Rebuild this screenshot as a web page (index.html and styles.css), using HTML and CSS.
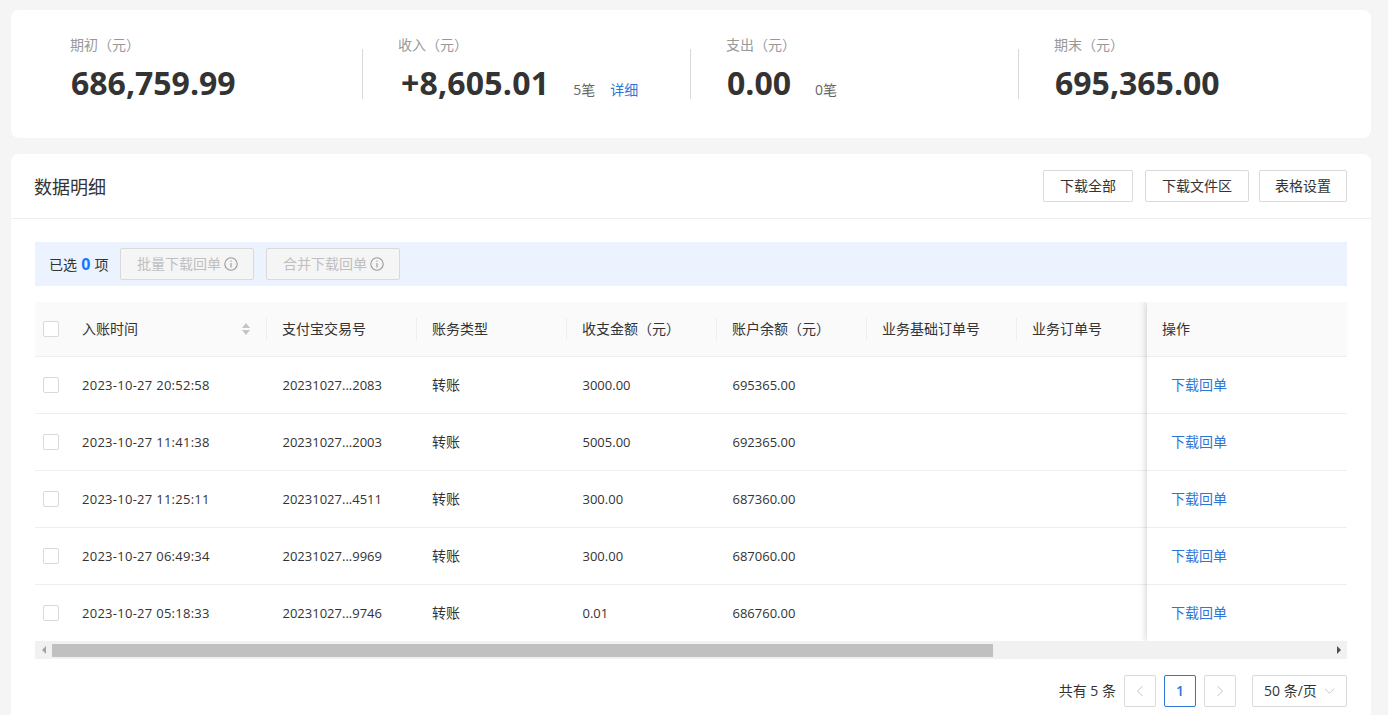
FILE: index.html
```html
<!DOCTYPE html>
<html lang="zh-CN">
<head>
<meta charset="utf-8">
<title>数据明细</title>
<link rel="stylesheet" href="styles.css">
</head>
<body>
<section class="card summary">
  <div class="stat">
    <div class="stat-label">期初（元）</div>
    <div class="stat-line"><span class="stat-value">686,759.99</span></div>
  </div>
  <div class="stat">
    <div class="stat-label">收入（元）</div>
    <div class="stat-line"><span class="stat-value stat-plus">+8,605.01</span><span class="stat-count">5笔</span><a class="stat-link">详细</a></div>
  </div>
  <div class="stat">
    <div class="stat-label">支出（元）</div>
    <div class="stat-line"><span class="stat-value">0.00</span><span class="stat-count">0笔</span></div>
  </div>
  <div class="stat">
    <div class="stat-label">期末（元）</div>
    <div class="stat-line"><span class="stat-value">695,365.00</span></div>
  </div>
</section>

<section class="card detail">
  <header class="detail-head">
    <h2 class="detail-title">数据明细</h2>
    <div class="detail-actions">
      <button class="btn btn-a">下载全部</button>
      <button class="btn btn-b">下载文件区</button>
      <button class="btn btn-c">表格设置</button>
    </div>
  </header>
  <div class="detail-body">
    <div class="select-bar">
      <span class="select-text">已选 <b class="select-num">0</b> 项</span>
      <button class="btn-off">批量下载回单<svg class="info" viewBox="0 0 14 14"><circle cx="7" cy="7" r="6.2"/><path d="M7 6v4.4M7 3.4v1.4"/></svg></button>
      <button class="btn-off">合并下载回单<svg class="info" viewBox="0 0 14 14"><circle cx="7" cy="7" r="6.2"/><path d="M7 6v4.4M7 3.4v1.4"/></svg></button>
    </div>

    <div class="table-wrap">
      <div class="table-main">
        <div class="row head">
          <div class="c c-check"><i class="check"></i></div>
          <div class="c c-time sep">入账时间<svg class="sort" viewBox="0 0 8 12"><path d="M4 0l4 5H0zM4 12L0 7h8z"/></svg></div>
          <div class="c c-n sep">支付宝交易号</div>
          <div class="c c-n sep">账务类型</div>
          <div class="c c-n sep">收支金额（元）</div>
          <div class="c c-n sep">账户余额（元）</div>
          <div class="c c-n sep">业务基础订单号</div>
          <div class="c c-s">业务订单号</div>
        </div>
        <div class="row">
          <div class="c c-check"><i class="check"></i></div>
          <div class="c c-time date">2023-10-27 20:52:58</div>
          <div class="c c-n num">20231027...2083</div>
          <div class="c c-n">转账</div>
          <div class="c c-n num">3000.00</div>
          <div class="c c-n num">695365.00</div>
          <div class="c c-n"></div>
          <div class="c c-s"></div>
        </div>
        <div class="row">
          <div class="c c-check"><i class="check"></i></div>
          <div class="c c-time date">2023-10-27 11:41:38</div>
          <div class="c c-n num">20231027...2003</div>
          <div class="c c-n">转账</div>
          <div class="c c-n num">5005.00</div>
          <div class="c c-n num">692365.00</div>
          <div class="c c-n"></div>
          <div class="c c-s"></div>
        </div>
        <div class="row">
          <div class="c c-check"><i class="check"></i></div>
          <div class="c c-time date">2023-10-27 11:25:11</div>
          <div class="c c-n num">20231027...4511</div>
          <div class="c c-n">转账</div>
          <div class="c c-n num">300.00</div>
          <div class="c c-n num">687360.00</div>
          <div class="c c-n"></div>
          <div class="c c-s"></div>
        </div>
        <div class="row">
          <div class="c c-check"><i class="check"></i></div>
          <div class="c c-time date">2023-10-27 06:49:34</div>
          <div class="c c-n num">20231027...9969</div>
          <div class="c c-n">转账</div>
          <div class="c c-n num">300.00</div>
          <div class="c c-n num">687060.00</div>
          <div class="c c-n"></div>
          <div class="c c-s"></div>
        </div>
        <div class="row">
          <div class="c c-check"><i class="check"></i></div>
          <div class="c c-time date">2023-10-27 05:18:33</div>
          <div class="c c-n num">20231027...9746</div>
          <div class="c c-n">转账</div>
          <div class="c c-n num">0.01</div>
          <div class="c c-n num">686760.00</div>
          <div class="c c-n"></div>
          <div class="c c-s"></div>
        </div>
      </div>
      <div class="table-fixed">
        <div class="row head"><div class="c c-op">操作</div></div>
        <div class="row"><div class="c c-op"><a class="op-link">下载回单</a></div></div>
        <div class="row"><div class="c c-op"><a class="op-link">下载回单</a></div></div>
        <div class="row"><div class="c c-op"><a class="op-link">下载回单</a></div></div>
        <div class="row"><div class="c c-op"><a class="op-link">下载回单</a></div></div>
        <div class="row"><div class="c c-op"><a class="op-link">下载回单</a></div></div>
      </div>
    </div>

    <div class="scrollbar">
      <span class="arrow arrow-l"></span>
      <div class="track"><div class="thumb"></div></div>
      <span class="arrow arrow-r"></span>
    </div>

    <nav class="pager">
      <span class="pager-total">共有 5 条</span>
      <span class="page"><svg class="chev" viewBox="0 0 10 12"><path d="M7.5 1L2.5 6l5 5"/></svg></span>
      <span class="page current">1</span>
      <span class="page"><svg class="chev" viewBox="0 0 10 12"><path d="M2.5 1l5 5-5 5"/></svg></span>
      <span class="size">50 条/页<svg class="chev-d" viewBox="0 0 12 8"><path d="M1 1.5l5 5 5-5"/></svg></span>
    </nav>
  </div>
</section>
</body>
</html>
```
FILE: styles.css
```css
* { box-sizing: border-box; }
html, body { height: 715px; overflow: hidden; }
body {
  margin: 0;
  padding: 10px 17px 0 11px;
  background: #f5f5f5;
  color: #333;
  font: 14px/20px "Open Sans", "Noto Sans CJK SC", sans-serif;
}
.card { background: #fff; border-radius: 8px; }

.summary {
  height: 128px;
  padding: 25px 24px 0;
  display: grid;
  grid-template-columns: repeat(4, 328px);
  margin-bottom: 16px;
}
.stat { padding-left: 35px; height: 64px; position: relative; }
.stat:not(:last-child)::after {
  content: "";
  position: absolute;
  right: 0;
  top: 14px;
  bottom: 0;
  width: 1px;
  background: #d9d9d9;
}
.stat-label { color: #999; line-height: 20px; }
.stat-line { display: flex; align-items: baseline; margin-top: 8px; padding-left: 1px; height: 40px; line-height: 40px; }
.stat-value { font-size: 32px; font-weight: 700; color: #333; }
.stat-plus { margin-left: 2px; letter-spacing: .2px; }
.stat-count { margin-left: 24px; color: #666; }
.stat-link { margin-left: 15px; color: #2f75d6; }

.detail { height: 580px; border-radius: 8px 8px 0 0; }
.detail-head {
  height: 65px;
  padding: 0 24px 0 23px;
  display: flex;
  align-items: center;
  justify-content: space-between;
  border-bottom: 1px solid #eee;
}
.detail-title { margin: 2px 0 0; font-size: 18px; font-weight: 400; color: #333; }
.detail-actions { display: flex; gap: 12px; }
.btn {
  height: 32px;
  border: 1px solid #d9d9d9;
  border-radius: 2px;
  background: #fff;
  color: #333;
  font: inherit;
  padding: 0;
}
.btn-a { width: 90px; }
.btn-b { width: 104px; margin-right: -2px; }
.btn-c { width: 88px; }

.detail-body { padding: 23px 24px 0; }
.select-bar {
  height: 44px;
  background: #ecf3fe;
  display: flex;
  align-items: center;
  padding-left: 14px;
  margin-bottom: 16px;
}
.select-text { margin-right: 12px; color: #333; word-spacing: .5px; }
.select-num { color: #1677ff; font-size: 16px; font-weight: 700; }
.btn-off {
  width: 134px;
  height: 32px;
  margin-right: 12px;
  padding: 0;
  border: 1px solid #d9d9d9;
  border-radius: 2px;
  background: #f5f5f5;
  color: #bfbfbf;
  font: inherit;
  display: flex;
  align-items: center;
  justify-content: center;
}
.info { width: 14px; height: 14px; margin-left: 3px; fill: none; stroke: #999; stroke-width: 1.1; }

.table-wrap { display: flex; width: 1312px; height: 339px; overflow: hidden; }
.table-main { width: 1112px; flex: none; }
.table-fixed {
  width: 200px;
  flex: none;
  position: relative;
  background: #fff;
  box-shadow: -2px 0 6px rgba(0, 0, 0, .14);
}
.row { display: flex; height: 57px; border-bottom: 1px solid #eee; align-items: center; background: #fff; }
.row.head { height: 55px; background: #fafafa; }
.c { height: 100%; display: flex; align-items: center; padding-left: 15px; position: relative; white-space: nowrap; flex: none; }
.c-check { width: 32px; padding-left: 8px; }
.c-time { width: 200px; padding-left: 15px; padding-right: 17px; justify-content: space-between; }
.c-n { width: 150px; }
.c-s { width: 130px; }
.c-op { width: 200px; }
.num { font-size: 13px; padding-left: 15.5px; }
.date { font-size: 13px; letter-spacing: .27px; }
.sep::after {
  content: "";
  position: absolute;
  right: 0;
  top: 16px;
  height: 22px;
  width: 1px;
  background: #eee;
}
.check { display: block; width: 16px; height: 16px; border: 1px solid #d9d9d9; border-radius: 2px; background: #fff; }
.sort { width: 8px; height: 12px; fill: #c4c4c4; }
.op-link { color: #2f75d6; padding-left: 9px; }

.scrollbar { display: flex; height: 18px; background: #f1f1f1; align-items: center; }
.arrow { width: 17px; height: 18px; flex: none; display: flex; align-items: center; justify-content: center; }
.arrow::before { content: ""; border: 4px solid transparent; }
.arrow-l::before { border-right-color: #a3a3a3; border-left-width: 0; }
.arrow-r::before { border-left-color: #505050; border-right-width: 0; }
.track { flex: 1; height: 18px; padding-top: 3px; }
.thumb { width: 941px; height: 13px; background: #c0c0c0; }

.pager { display: flex; align-items: center; justify-content: flex-end; margin-top: 16px; height: 32px; }
.pager-total { margin-right: 8px; }
.page {
  width: 32px;
  height: 32px;
  border: 1px solid #d9d9d9;
  border-radius: 2px;
  margin-right: 8px;
  display: flex;
  align-items: center;
  justify-content: center;
}
.page.current { border-color: #2f75d6; color: #2f75d6; font-weight: 600; }
.chev { width: 10px; height: 12px; fill: none; stroke: #c4c4c4; stroke-width: 1; }
.size {
  width: 95px;
  height: 32px;
  margin-left: 8px;
  border: 1px solid #d9d9d9;
  border-radius: 2px;
  display: flex;
  align-items: center;
  padding-left: 11px;
}
.chev-d { width: 11px; height: 8px; margin-left: 7px; fill: none; stroke: #c4c4c4; stroke-width: 1; }
```
